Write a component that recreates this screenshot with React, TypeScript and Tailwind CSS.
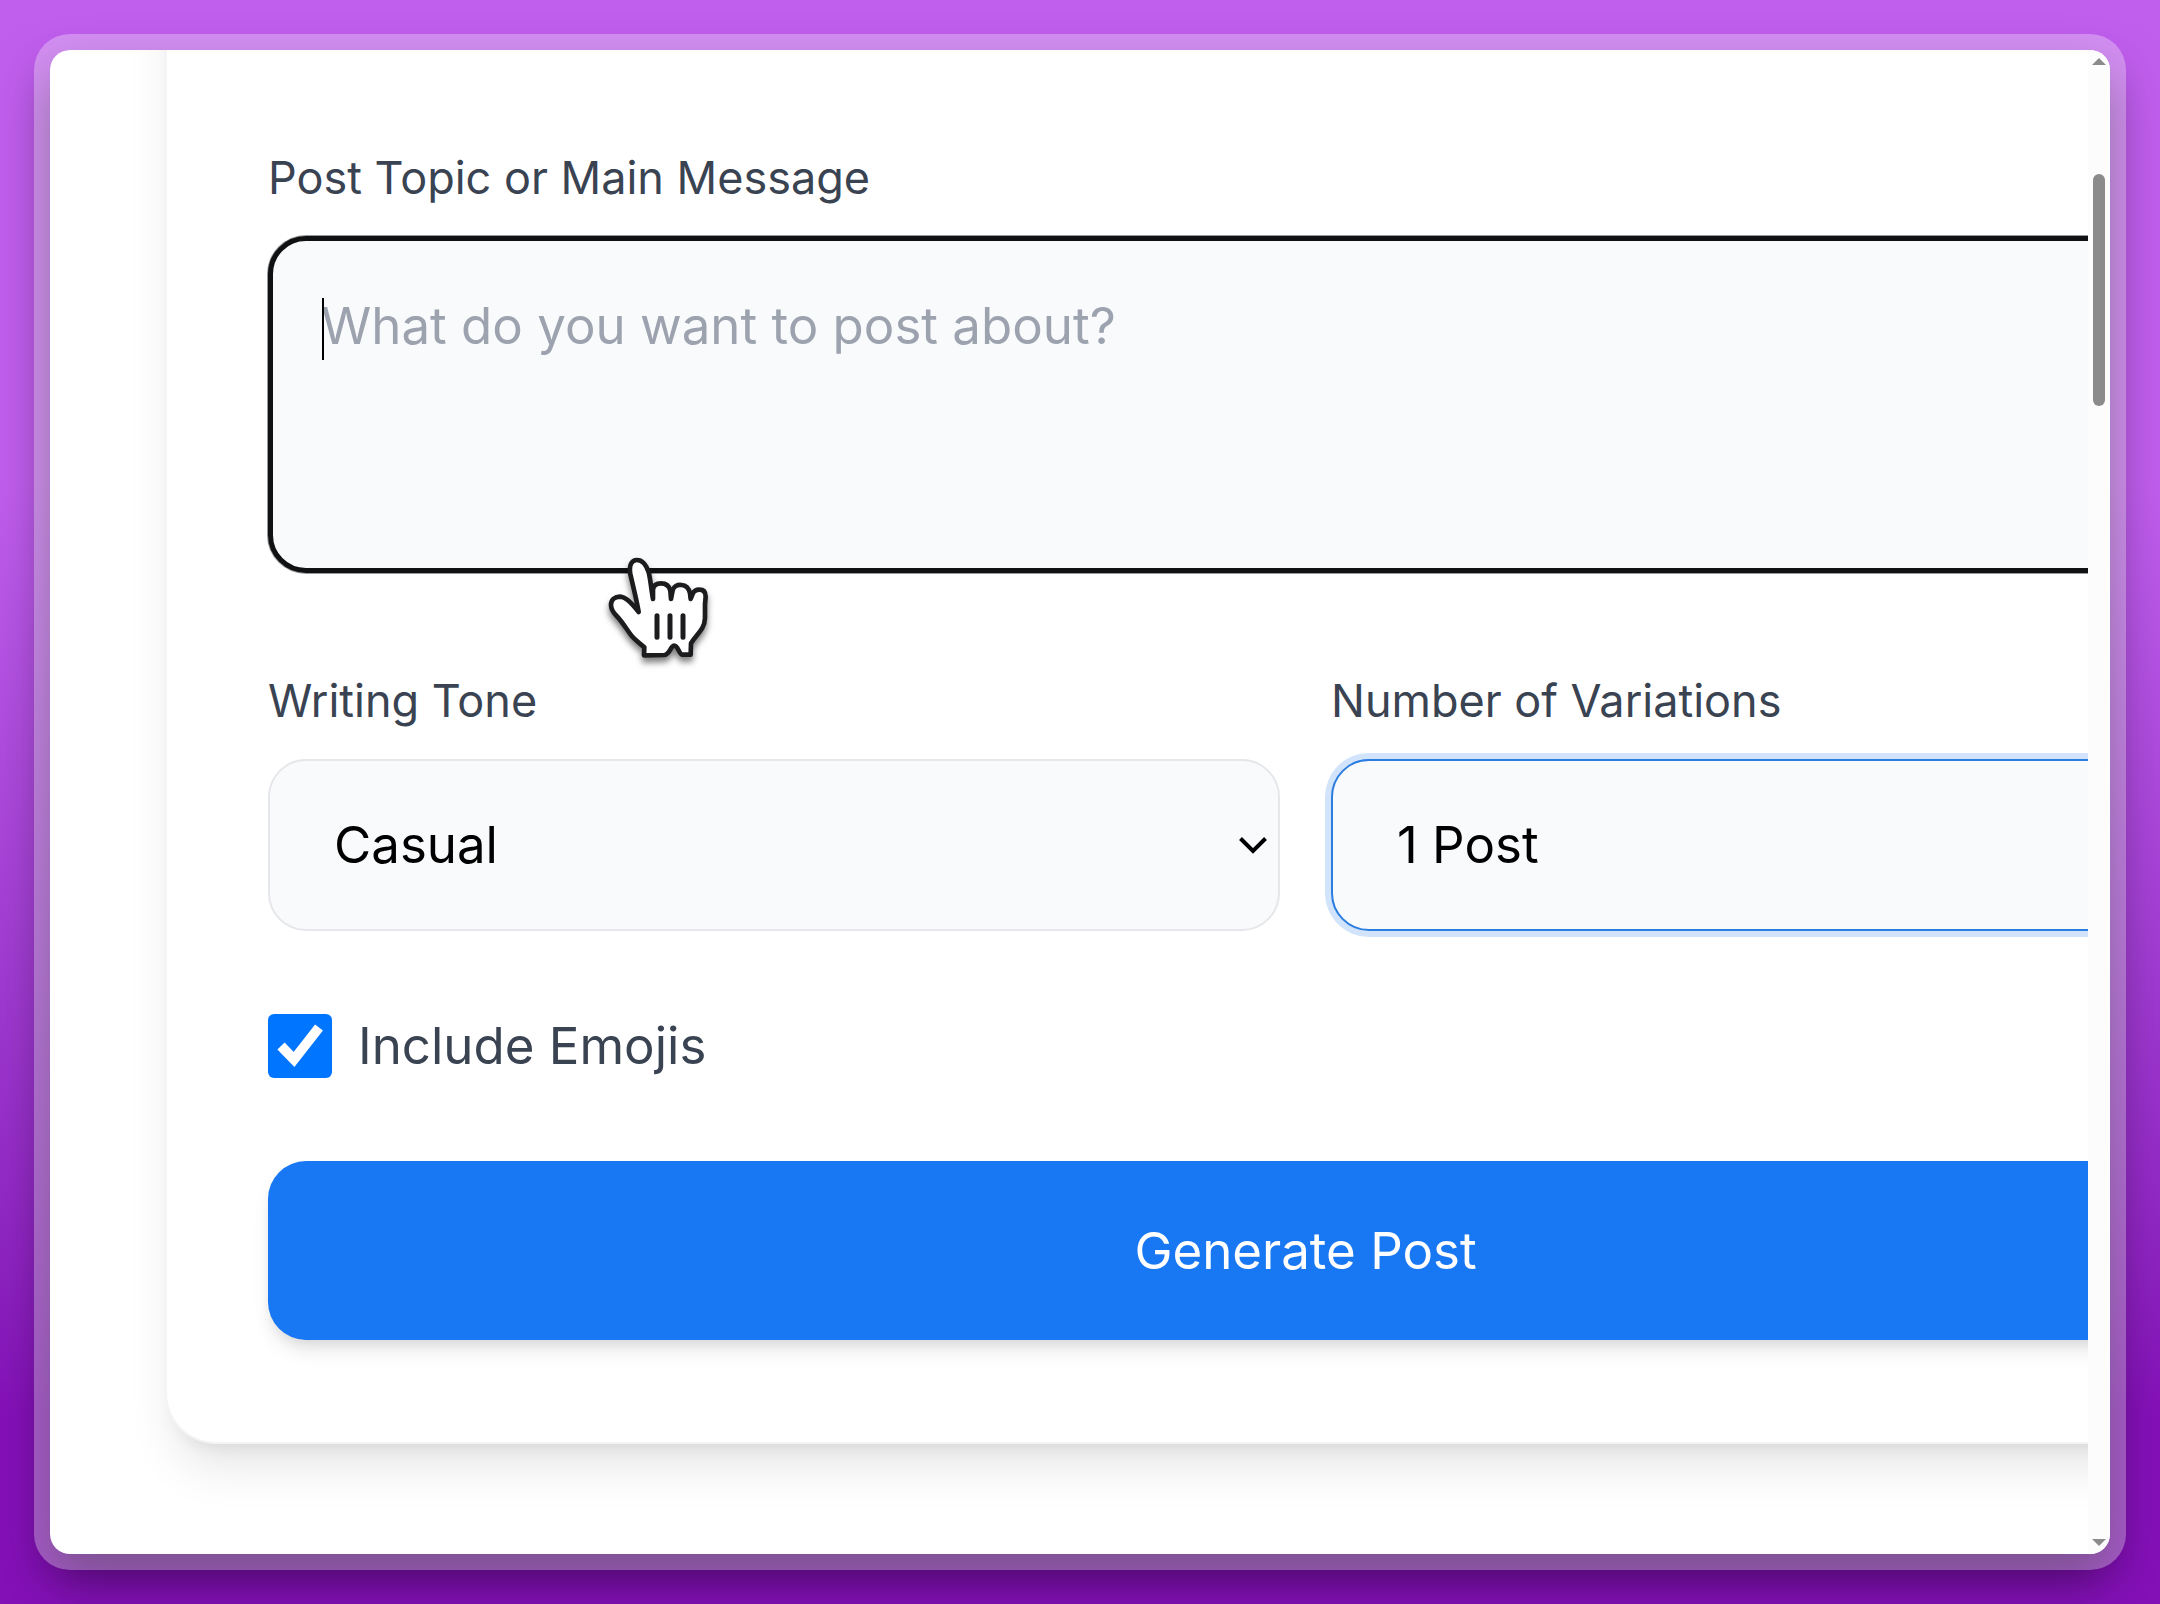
import React, { useState } from 'react'
import { clsx } from 'clsx'

const labelClass = 'block h-16 text-[45px] leading-[64px] text-[#3a4352]'

interface SelectFieldProps {
  id: string
  label: string
  options: string[]
  active?: boolean
}

function SelectField({ id, label, options, active = false }: SelectFieldProps) {
  const [value, setValue] = useState(options[0])

  return (
    <div className="flex-1 min-w-0">
      <label htmlFor={id} className={labelClass}>
        {label}
      </label>
      <div className="relative mt-[26px]">
        <select
          id={id}
          value={value}
          onChange={(e) => setValue(e.target.value)}
          className={clsx(
            'block w-full h-[172px] appearance-none rounded-[38px] border-2 bg-[#f9fafc] px-16 text-[51px] text-black outline-none',
            active ? 'border-[#2b7de0] ring-[6px] ring-[#d1e4fc]' : 'border-[#e5e7eb]'
          )}
        >
          {options.map((option) => (
            <option key={option}>{option}</option>
          ))}
        </select>
        <svg
          className="pointer-events-none absolute right-3 top-1/2 h-[20px] w-[30px] -translate-y-1/2"
          viewBox="0 0 30 20"
          fill="none"
          stroke="black"
          strokeWidth="4"
        >
          <path d="M2.5 3.5 15 16 27.5 3.5" />
        </svg>
      </div>
    </div>
  )
}

function EmojiCheckbox() {
  const [checked, setChecked] = useState(true)

  return (
    <div className="flex h-[76px] items-center gap-[26px]">
      <span className="relative h-16 w-16">
        <input
          id="emojis"
          type="checkbox"
          checked={checked}
          onChange={(e) => setChecked(e.target.checked)}
          className="block h-16 w-16 appearance-none rounded-md border-2 border-gray-500 bg-white checked:border-0 checked:bg-[#0075ff]"
        />
        {checked && (
          <svg className="pointer-events-none absolute inset-0 h-16 w-16" viewBox="0 0 64 64" fill="none" stroke="white" strokeWidth="10">
            <path d="M13 32 26 45.500 51 13.500" />
          </svg>
        )}
      </span>
      <label htmlFor="emojis" className="text-[51px] leading-[76px] text-[#3a4352]">
        Include Emojis
      </label>
    </div>
  )
}

function Scrollbar() {
  return (
    <div className="flex w-[22px] shrink-0 flex-col items-center bg-[#fcfcfc] py-2">
      <svg className="h-[7px] w-[14px]" viewBox="0 0 14 7" fill="#8b8b8b">
        <path d="M7 0 14 7H0Z" />
      </svg>
      <div className="mt-[109px] h-[232px] w-3 rounded-full bg-[#8b8b8b]" />
      <svg className="mt-auto h-[7px] w-[14px]" viewBox="0 0 14 7" fill="#8b8b8b">
        <path d="M0 0H14L7 7Z" />
      </svg>
    </div>
  )
}

function HandCursor() {
  return (
    <svg
      className="pointer-events-none absolute left-[339px] top-[319px] h-[120px] w-[110px] drop-shadow-[0_5px_3px_rgba(0,0,0,0.5)]"
      viewBox="80 75 330 360"
      fill="white"
      stroke="#1c1c1e"
      strokeWidth="14"
      strokeLinejoin="round"
      strokeLinecap="round"
    >
      <path d="M191 376 192 352C180 341 162 329 151 314C138 296 123 272 109 258C99 248 92 238 92 225C92 208 104 200 119 200C137 201 153 219 175 246C169 210 158 168 150 132C146 110 151 90 170 90C187 90 198 106 205 127C210 144 213 181 218 207L218 178C220 164 231 160 242 160C258 160 267 169 270 182L272 207L277 181C280 169 291 164 303 165C319 166 326 176 329 190L331 207L337 192C341 182 348 179 357 179C370 179 376 187 376 200L374 222L374 264C373 300 346 314 332 340L331 374 305 374C296 372 293 346 281 347C270 348 269 373 252 375Z" />
      <path d="M230 257V322M269 257V322M308 257V322" strokeWidth="15" />
    </svg>
  )
}

export default function App() {
  const [topic, setTopic] = useState('')

  return (
    <main className="h-screen bg-linear-to-b from-[#c05eee] from-30% to-[#8410b8] to-88% p-[50px] font-['Inter',sans-serif]">
      <div className="flex h-full rounded-[20px] shadow-[0_0_0_16px_rgba(255,255,255,0.3),0_24px_50px_rgba(0,0,0,0.5)]">
        <div className="flex min-w-0 flex-1 overflow-hidden rounded-[20px] bg-white">
          {/* Scrolled page content, cut off at the scrollbar */}
          <div className="min-w-0 flex-1 overflow-hidden">
            <form
              onSubmit={(e) => e.preventDefault()}
              className="-mr-[358px] -mt-32 ml-[115px] rounded-[51px] border-2 border-t-0 border-[#f3f4f6] bg-white px-[101px] pb-[102px] pt-56 shadow-[0_32px_48px_-10px_rgba(0,0,0,0.1),0_13px_19px_-13px_rgba(0,0,0,0.1)]"
            >
              <label htmlFor="topic" className={labelClass}>
                Post Topic or Main Message
              </label>
              <div className="relative mt-[26px]">
                <textarea
                  id="topic"
                  rows={3}
                  value={topic}
                  onChange={(e) => setTopic(e.target.value)}
                  placeholder="What do you want to post about?"
                  className="block w-full resize-none rounded-[38px] border-[5px] border-[#101113] bg-[#f9fafc] px-12 pb-[50px] pt-[46px] text-[51px] leading-[77px] text-black outline-none ring-1 ring-black/40 placeholder:text-[#9ca3af]"
                />
                {/* Text caret */}
                <span className="absolute left-[54px] top-[62px] h-[62px] w-[2px] bg-black" />
                <HandCursor />
              </div>

              <div className="mt-24 flex gap-[51px]">
                <SelectField id="tone" label="Writing Tone" options={['Casual', 'Professional', 'Funny']} />
                <SelectField id="variations" label="Number of Variations" options={['1 Post', '2 Posts', '3 Posts']} active />
              </div>

              <div className="mt-[77px]">
                <EmojiCheckbox />
              </div>

              <button
                type="submit"
                className="mt-[77px] block w-full rounded-[38px] bg-[#1877f2] py-[51px] text-[51px] leading-[77px] text-white shadow-[0_13px_19px_-3px_rgba(0,0,0,0.1),0_6px_13px_-6px_rgba(0,0,0,0.1)]"
              >
                Generate Post
              </button>
            </form>
          </div>
          <Scrollbar />
        </div>
      </div>
    </main>
  )
}
